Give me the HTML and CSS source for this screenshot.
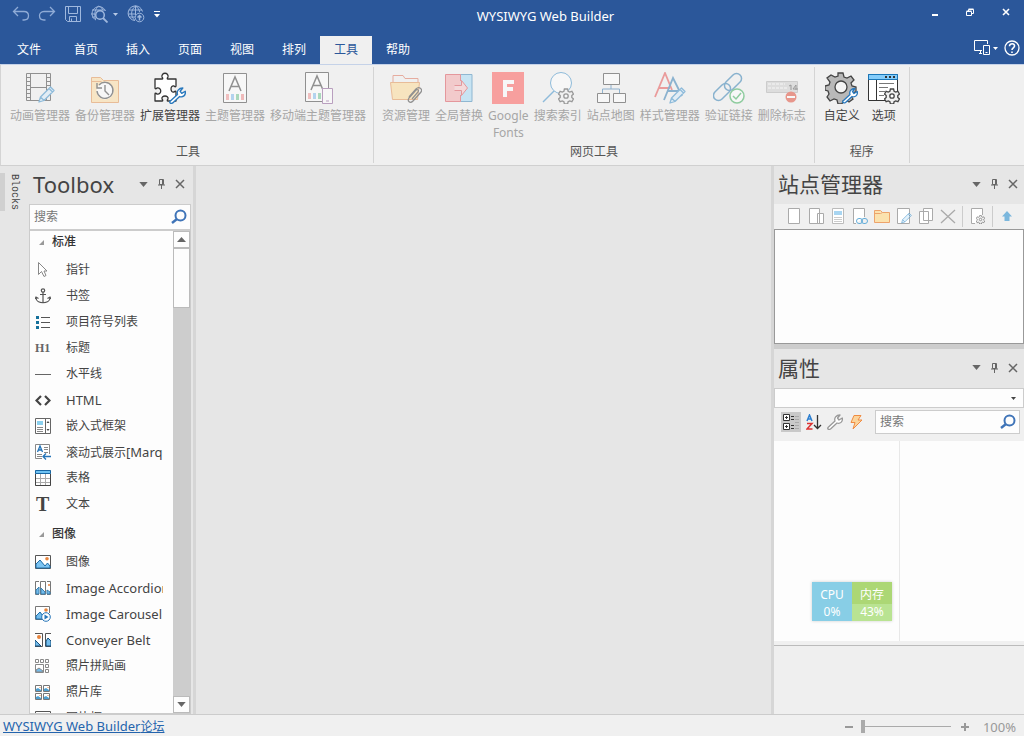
FILE: index.html
```html
<!DOCTYPE html>
<html lang="zh-CN">
<head>
<meta charset="utf-8">
<meta name="viewport" content="width=device-width, initial-scale=1">
<title>WYSIWYG Web Builder</title>
<link rel="stylesheet" href="styles.css">
</head>
<body>
<svg class="defs" aria-hidden="true">
  <symbol id="caret" viewBox="0 0 10 6"><path d="M0 0h10L5 6z" fill="currentColor"/></symbol>
  <symbol id="pin" viewBox="0 0 9 12"><path d="M2.500 1.500h4v5h-4zM5.500 1.500v5M1 7h7M4.500 7v4" fill="none" stroke="currentColor"/></symbol>
  <symbol id="close" viewBox="0 0 10 10"><path d="M1 1l8 8M9 1L1 9" fill="none" stroke="currentColor" stroke-width="1.500"/></symbol>
  <symbol id="lens" viewBox="0 0 16 16"><circle cx="9.500" cy="6.500" r="5" fill="none" stroke="#3f74b8" stroke-width="2"/><path d="M6 10l-5 4" stroke="#3f74b8" stroke-width="2.500"/></symbol>
  <symbol id="gear" viewBox="-8 -8 16 16"><path d="M-1.600-7h3.200l.5 2.200 1.600.9 2.200-.8 1.600 2.800-1.700 1.500v1.800l1.700 1.500-1.600 2.800-2.200-.8-1.600.9-.5 2.200h-3.200l-.5-2.200-1.600-.9-2.200.8-1.600-2.800 1.700-1.500v-1.800l-1.700-1.500 1.600-2.800 2.200.8 1.600-.9z" fill="#f0f0f0" stroke="#444" stroke-width="1.300"/><circle r="2.200" fill="#fff" stroke="#444" stroke-width="1.300"/></symbol>
  <symbol id="wrench" viewBox="0 0 16 16"><path d="M1 13.500L8 7C7 4 9 1 13 1l-2.500 3 1.500 2 3.300-2C16 8 13 10 10 9l-6.500 6C2 16 0 15 1 13.500z" fill="#fff" stroke="currentColor" stroke-width="1.300" stroke-linejoin="round"/></symbol>
  <symbol id="pencil" viewBox="0 0 17 17"><path d="M1 16l1.500-5L12.500 1l3.500 3.500L6 14.500zM2.500 11L6 14.500M11 2.500L14.500 6" fill="#d5ecfb" stroke="#2f87c5" stroke-width="1.300" stroke-linejoin="round"/></symbol>
  <symbol id="photo" viewBox="0 0 16 14"><path d="M.5.5h15v13H.5z" fill="#fff" stroke="#555"/><path d="M1 9l4-4 5 6 2.500-3L15 11v2H1z" fill="#7cc4f2" stroke="#1c6ca8"/><circle cx="12" cy="3.800" r="1.800" fill="#e8853e"/></symbol>
  <symbol id="thumbnail" viewBox="0 0 7 7"><path d="M.5.5h6v6h-6z" fill="#fff" stroke="#777"/><path d="M1 4l2-1 3 2v1H1z" fill="#4d9fd0"/><path d="M4.500 2h1v1h-1z" fill="#e8853e"/></symbol>
</svg>

<header class="app-header">
  <div class="titlebar">
    <div class="quick">
      <button aria-label="撤消"><svg width="18" height="18" viewBox="0 0 18 18" fill="none" stroke="#8fabd6" stroke-width="1.300"><path d="M6 2L1.500 6.500 6 11M1.500 6.500H12c6 0 6 8.500 0 8.500h-1.500"/></svg></button>
      <button aria-label="重做"><svg width="18" height="18" viewBox="0 0 18 18" fill="none" stroke="#8fabd6" stroke-width="1.300"><path d="M12 2l4.500 4.500L12 11M16.500 6.500H6C0 6.500 0 15 6 15h1.500"/></svg></button>
      <button aria-label="保存"><svg width="18" height="18" viewBox="0 0 18 18" fill="none" stroke="#9fb8de"><path d="M1.500 1.500h15v15h-13l-2-2zM4.500 1.500v7h9v-7M5.500 16.500v-5h7v5M7.500 13.500v3"/></svg></button>
      <button class="preview" aria-label="预览"><svg width="18" height="18" viewBox="0 0 18 18" fill="none" stroke="#9fb8de"><path d="M15.500 6A7 7 0 1 0 6 15M8.500 1C5 4 4 9 5.500 14.500M8.500 1c3 1 4 3 4.500 4M2 5h13M1 9h4M2 12h3"/><circle cx="10" cy="10" r="4.300" stroke-width="1.500"/><path d="M13 13l4.500 4.500" stroke-width="1.800"/></svg><svg width="5" height="3" class="pale"><use href="#caret"/></svg></button>
      <button class="publish" aria-label="发布"><svg width="18" height="18" viewBox="0 0 18 18" fill="none" stroke="#9fb8de"><path d="M15.500 6.500A7.300 7.300 0 1 0 8 15.500M8.500 1c-5 4-5 10-1 14M8.500 1c2.500 1.500 4 4 4 6M8.500 1v9M2 5h13M1 9h8M2 12h6"/><circle cx="12.500" cy="12.500" r="4.300"/><path d="M12.500 15.500v-5M10.500 12.500l2-2 2 2" stroke-width="1.500"/></svg></button>
      <button class="more" aria-label="自定义快速访问工具栏"><svg width="6" height="7" viewBox="0 0 6 7" fill="#fff"><path d="M0 0h6v1H0zM0 3h6L3 6.500z"/></svg></button>
    </div>
    <h1 class="title">WYSIWYG Web Builder</h1>
    <div class="window-buttons">
      <button aria-label="最小化"><svg width="8" height="12"><path d="M1 9h6" stroke="#fff" stroke-width="2"/></svg></button>
      <button aria-label="还原"><svg width="9" height="9" fill="none" stroke="#fff"><path d="M.5 3.500h5v4h-5zM2.500 3.500v-2h5v4h-2M2.500 1h5M.5 3h5"/></svg></button>
      <button aria-label="关闭"><svg width="8" height="8" fill="none" stroke="#fff" stroke-width="1.600"><path d="M1 1l6 6M7 1L1 7"/></svg></button>
    </div>
  </div>
  <nav class="tabs">
    <button class="tab file">文件</button>
    <button class="tab">首页</button>
    <button class="tab">插入</button>
    <button class="tab">页面</button>
    <button class="tab">视图</button>
    <button class="tab">排列</button>
    <button class="tab active">工具</button>
    <button class="tab">帮助</button>
    <div class="tab-tools">
      <button aria-label="断点"><svg width="17" height="16" viewBox="0 0 17 16" fill="none" stroke="#fff"><path d="M8 10.500H.5v-10h13V4M5 13.500h3M6.500 11v2.500M9.500 5.500h6v9h-6zM11.500 12.500h2"/></svg><svg width="5" height="3"><use href="#caret"/></svg></button>
      <button aria-label="帮助"><svg width="16" height="16" fill="none" stroke="#fff" stroke-width="1.300"><circle cx="8" cy="8" r="7"/><path d="M5.500 6.200C5.500 2.800 11 3 10.500 6.200 10.300 7.800 8 8 8 10M8 11.500V13" stroke-width="1.600"/></svg></button>
    </div>
  </nav>
</header>

<section class="ribbon">
  <div class="group">
    <div class="commands">
      <button class="command" disabled><svg width="32" height="32" fill="none" stroke="#333"><path d="M2.500 1.500h24v27h-24zM6.500 1.500v27M22.500 1.500v27M6.500 15.500h16M2.500 5.500h4M2.500 9.500h4M2.500 13.500h4M2.500 17.500h4M2.500 21.500h4M2.500 25.500h4M22.500 5.500h4M22.500 9.500h4M22.500 13.500h4M22.500 17.500h4"/><use href="#pencil" x="14" y="14" width="17" height="17"/></svg><span>动画管理器</span></button>
      <button class="command" disabled><svg width="32" height="32" fill="#ffdc9c" stroke="#e28a43"><path d="M2.500 30.500v-25h9l3 3h15v22zM2.500 9.500h10"/><circle cx="16" cy="19" r="8.500" fill="#fff" stroke="none"/><path d="M10 13a8 8 0 1 1-2 6M8 11v5h5M16 13v6l4 4" fill="none" stroke="#333" stroke-width="1.400"/></svg><span>备份管理器</span></button>
      <button class="command"><svg width="32" height="32" fill="#fff" stroke="#333" stroke-width="1.300"><path d="M1 7h7c1 0 1-1 0-2-1-5 7-5 6 0-1 1-1 2 0 2h8v7c0 1-1 1-2 0-4-1-4 7 0 6 1-1 2-1 2 0v9h-8c-1 0-1-1 0-2 1-4-7-4-6 0 1 1 1 2 0 2H1v-7c0-1 1-1 2 0 5 1 5-7 0-6-1 1-2 1-2 0z" stroke-linejoin="round"/><use href="#wrench" x="15" y="15" width="17" height="17" class="blue"/></svg><span>扩展管理器</span></button>
      <button class="command" disabled><svg width="32" height="32" fill="#fff" stroke="#333"><path d="M4.500 1.500h23v29h-23z"/><path d="M10 19l6-14 6 14M12 14.500h8" fill="none" stroke-width="1.500"/><path d="M7 22h3v6H7z" fill="#f09090" stroke="none"/><path d="M12 22h3v6h-3z" fill="#77b8ed" stroke="none"/><path d="M17 22h3v6h-3z" fill="#67c18a" stroke="none"/><path d="M22 22h3v6h-3z" fill="#ef8585" stroke="none"/></svg><span>主题管理器</span></button>
      <button class="command" disabled><svg width="32" height="32" fill="#fff" stroke="#333"><path d="M3.500.5h23v29h-23z"/><path d="M9 18l6-14 6 14M11 13.500h8" fill="none" stroke-width="1.500"/><path d="M6 21h3v6H6z" fill="#f09090" stroke="none"/><path d="M11 21h3v6h-3z" fill="#77b8ed" stroke="none"/><path d="M16 21h3v6h-3z" fill="#67c18a" stroke="none"/><path d="M20.500 16.500h10v15h-10zM24 29h3" stroke="#83518f"/></svg><span>移动端主题管理器</span></button>
    </div>
    <h2 class="group-name">工具</h2>
  </div>
  <div class="group web">
    <div class="commands">
      <button class="command" disabled><svg width="32" height="32" fill="#ffd98f" stroke="#e28a43"><path d="M3 10V3.500h10l2 3h13V11" fill="none" stroke="#dd6b50"/><path d="M.5 10.500h29l-2 17h-25z"/><path d="M19 25l7-8c3-3 7 0 5 3l-8 9c-3 3-6 0-4-3l7-8c2-1 3 0 2 2l-6 7" fill="none" stroke="#333" stroke-width="1.300"/></svg><span>资源管理</span></button>
      <button class="command" disabled><svg width="32" height="32" fill="#f4a5a8" stroke="#d9414a"><path d="M14 2.500h15v27H14z" fill="#9fd9f6" stroke="#317fb4"/><path d="M2.500 2.500h15v27h-15z" stroke="none"/><path d="M17.500 9V2.500h-15v27h15V23" fill="none"/><path d="M11.500 13.500h7v-5l6 7.500-6 7.500v-5h-7" fill="#f8c4c6"/></svg><span>全局替换</span></button>
      <button class="command" disabled><svg width="32" height="32"><path d="M0 0h32v32H0z" fill="#ff504f"/><path d="M11 8h11v4h-7v3h6v4h-6v6h-4z" fill="#fff"/></svg><span>Google<br>Fonts</span></button>
      <button class="command" disabled><svg width="32" height="32" fill="#fff" stroke="#2f87c5"><path d="M1 30l12-12" stroke-width="1.500"/><circle cx="19" cy="11" r="10.500"/><use href="#gear" x="16" y="16" width="16" height="16"/></svg><span>搜索索引</span></button>
      <button class="command" disabled><svg width="32" height="32" fill="#fff" stroke="#333"><path d="M16 13v4M7.500 22v-5h17v5" fill="none" stroke="#2f75ae"/><path d="M8.500 1.500h16v11h-16zM2.500 21.500h12v9h-12zM18.500 21.500h12v9h-12z"/></svg><span>站点地图</span></button>
      <button class="command" disabled><svg width="32" height="32" fill="none" stroke="#e64949" stroke-width="1.800"><path d="M1 25L11 1l7 17M5 16h11"/><path d="M10 28l9-22 9 18M14 19h11" stroke="#2775b0"/><use href="#pencil" x="15" y="15" width="17" height="17"/></svg><span>样式管理器</span></button>
      <button class="command" disabled><svg width="32" height="32" fill="none" stroke="#2375ae" stroke-width="1.500"><rect x="-5" y="-10" width="10" height="20" rx="5" transform="translate(20 10) rotate(45)"/><rect x="-5" y="-10" width="10" height="20" rx="5" transform="translate(9 20) rotate(45)"/><circle cx="24" cy="24" r="7" fill="#fff" stroke="#31aa51"/><path d="M20 24l3 3 5-6" stroke="#31aa51"/></svg><span>验证链接</span></button>
      <button class="command" disabled><svg width="32" height="32" fill="#ccc" stroke="#aaa"><path d="M.5 9.500h31v11H.5z"/><path d="M2 12h17M2 16h20" stroke="#fff" stroke-dasharray="3 1"/><path d="M23 14l2-1v5M30 18v-5l-3 4h5" fill="none" stroke="#444"/><circle cx="25" cy="25" r="5.500" fill="#df3e29" stroke="none"/><path d="M21 25h8" stroke="#fff" stroke-width="2"/></svg><span>删除标志</span></button>
    </div>
    <h2 class="group-name">网页工具</h2>
  </div>
  <div class="group last">
    <div class="commands">
      <button class="command"><svg width="34" height="32" fill="#b8b8b8" stroke="#444" stroke-width="1.300"><path d="M13 1h5l1 4 3 1 4-2 3 4-3 3 1 3 4 1v5l-4 1-1 3 2 3-4 3-3-2-3 1-1 3h-4l-1-4-3-1-4 2-3-4 2-3-1-3-3-1v-4l4-1 1-3-3-4 4-3 4 2 3-1z"/><circle cx="16" cy="15" r="6" fill="#f4f4f4"/><use href="#wrench" x="17" y="15" width="16" height="17" class="blue"/></svg><span>自定义</span></button>
      <button class="command"><svg width="32" height="32" fill="#fff" stroke="#333"><path d="M.5 2.500h29v26H.5zM8.500 7v21"/><path d="M.5 2.500h29v5H.5z" fill="#84ccfa" stroke="#1976b8"/><path d="M17 5h2M21 5h2M25 5h2" stroke-width="2"/><path d="M11 11.500h15M11 15.500h9M11 19.500h6M11 23.500h5" stroke="#777"/><use href="#gear" x="16" y="16" width="16" height="16"/></svg><span>选项</span></button>
    </div>
    <h2 class="group-name">程序</h2>
  </div>
</section>

<main class="workspace">
  <aside class="dock-strip"><button class="dock-tab">Blocks</button></aside>

  <section class="toolbox">
    <header class="panel-head">
      <h2 class="latin-title">Toolbox</h2>
      <button aria-label="菜单"><svg width="9" height="5"><use href="#caret"/></svg></button>
      <button aria-label="固定"><svg width="9" height="12"><use href="#pin"/></svg></button>
      <button aria-label="关闭"><svg width="10" height="10"><use href="#close"/></svg></button>
    </header>
    <label class="search"><input type="text" placeholder="搜索" aria-label="搜索工具"><svg width="16" height="16"><use href="#lens"/></svg></label>
    <div class="tool-area">
      <div class="tool-list">
        <h3><svg width="5" height="5"><path d="M5 0v5H0z" fill="#999"/></svg>标准</h3>
        <ul>
          <li><svg width="16" height="16" fill="#fff" stroke="#888"><path d="M3.500.5v12l3-3 2.500 5 2-1-2-4.500H12z"/></svg><span>指针</span></li>
          <li><svg width="16" height="16" fill="none" stroke="#555" stroke-width="1.200"><circle cx="8" cy="2.500" r="1.700"/><path d="M8 4v11M5 6.500h6M1 9.500c0 7 14 7 14 0M0 11l1-2 2.500 1.500M12.500 10.500L15 9l1 2"/></svg><span>书签</span></li>
          <li><svg width="16" height="16" fill="#16719b"><path d="M1 2h3v3H1zM1 7h3v3H1zM1 12h3v3H1z"/><path d="M6 3.500h9M6 8.500h9M6 13.500h9" stroke="#555"/></svg><span>项目符号列表</span></li>
          <li><b class="h1-icon">H1</b><span>标题</span></li>
          <li><svg width="16" height="16"><path d="M0 8.500h16" stroke="#666"/></svg><span>水平线</span></li>
          <li><svg width="16" height="16" fill="none" stroke="#444" stroke-width="2.200"><path d="M6 4L1.500 8.500 6 13M10 4l4.500 4.500L10 13"/></svg><span class="latin">HTML</span></li>
          <li><svg width="16" height="16" fill="#fff" stroke="#666"><path d="M.5.500h15v15H.5zM10.500.5v15"/><path d="M2 3h6v4H2z" fill="#8bd0ee" stroke="none"/><path d="M2 9.500h6M2 11.500h6M2 13.500h6" stroke="#888"/><path d="M11.500 5h3l-1.500-2zM11.500 11h3l-1.500 2z" fill="#444" stroke="none"/></svg><span>嵌入式框架</span></li>
          <li><svg width="16" height="16" fill="#fff" stroke="#888"><path d="M14.500 10V.5H.5v14H7M9 3.500h4M9 5.500h4M9 8.500h4M2 10.500h5M2 12.500h5"/><path d="M2.500 8L5 2l2.500 6M3.500 6h3M8 12.500h8M11 9.500l-3 3 3 3" fill="none" stroke="#2474b8" stroke-width="1.300"/></svg><span>滚动式展示<span class="latin">[Marquee]</span></span></li>
          <li><svg width="16" height="16" fill="#fff" stroke="#aaa"><path d="M.5.500h15v15H.5zM5.500 4v11M10.500 4v11M1 8.500h14M1 12.500h14"/><path d="M.5 4v11.500h15V4" fill="none" stroke="#444"/><path d="M.5.500h15v3H.5z" fill="#6fc2f2" stroke="#1867a4"/></svg><span>表格</span></li>
          <li><b class="text-icon">T</b><span>文本</span></li>
        </ul>
        <h3><svg width="5" height="5"><path d="M5 0v5H0z" fill="#999"/></svg>图像</h3>
        <ul>
          <li><svg width="16" height="14"><use href="#photo"/></svg><span>图像</span></li>
          <li><svg width="16" height="14" fill="#fff" stroke="#777"><path d="M4 .5H.5v13H4M5.500.5h5v13h-5zM12 .5h3.500v13H12"/><path d="M1 9l3-3v7H1zM6 7l4 4v2H6zM12 9l3 2v2h-3z" fill="#73bcec" stroke="#3b80b0"/><circle cx="14" cy="4" r="1" fill="#e8853e" stroke="none"/></svg><span class="latin">Image Accordion</span></li>
          <li><svg width="16" height="16" fill="#fff" stroke="#777"><path d="M7 13.500H.5V.5h14V7"/><path d="M1 10l4-4 3 4v3H1z" fill="#73bcec" stroke="#1c6ca8"/><circle cx="11" cy="4" r="1.800" fill="#e8853e" stroke="none"/><circle cx="11" cy="11" r="4.300" stroke="#2474b8"/><path d="M9.500 8.500l4 2.500-4 2.500z" fill="#2474b8" stroke="none"/></svg><span class="latin">Image Carousel</span></li>
          <li><svg width="16" height="14" fill="#fff" stroke="#555"><path d="M0 .5h7.500v13H0M16 .5h-5.500v13H16"/><path d="M0 7l6 6H0zM11 8l2-3 3 3v5h-5z" fill="#73bcec" stroke="#164f7b"/><circle cx="4" cy="4" r="2" fill="#e8853e" stroke="none"/></svg><span class="latin">Conveyer Belt</span></li>
          <li><svg width="14" height="14" fill="#fff" stroke="#888"><path d="M.5.500h3v3h-3zM5.500.500h3v3h-3zM10.500.500h3v3h-3zM10.500 5.500h3v3h-3zM10.500 10.500h3v3h-3zM.5 5.500h8v8h-8z"/><path d="M1 11l3-2 4 3v1H1z" fill="#73bcec"/></svg><span>照片拼贴画</span></li>
          <li><svg width="15" height="15"><use href="#thumbnail" width="7" height="7"/><use href="#thumbnail" x="8" width="7" height="7"/><use href="#thumbnail" y="8" width="7" height="7"/><use href="#thumbnail" x="8" y="8" width="7" height="7"/></svg><span>照片库</span></li>
          <li><svg width="16" height="14"><use href="#photo"/></svg><span>图片框</span></li>
        </ul>
      </div>
      <div class="scrollbar">
        <button aria-label="向上"><svg width="9" height="5"><path d="M0 5h9L4.500 0z" fill="#666"/></svg></button>
        <div class="thumb"></div>
        <button class="down" aria-label="向下"><svg width="9" height="5"><use href="#caret"/></svg></button>
      </div>
    </div>
  </section>
  <div class="splitter"></div>
  <section class="canvas"></section>
  <div class="splitter right"></div>

  <aside class="side">
    <section class="site">
      <header class="panel-head">
        <h2>站点管理器</h2>
        <button aria-label="菜单"><svg width="9" height="5"><use href="#caret"/></svg></button>
        <button aria-label="固定"><svg width="9" height="12"><use href="#pin"/></svg></button>
        <button aria-label="关闭"><svg width="10" height="10"><use href="#close"/></svg></button>
      </header>
      <div class="site-tools">
        <button aria-label="新建页面"><svg width="16" height="16" fill="#fff" stroke="#aaa"><path d="M2.500.5h11v15h-11z"/></svg></button>
        <button aria-label="移动页面"><svg width="16" height="16" fill="#fff" stroke="#aaa"><path d="M1.500.5h10v15h-10zM9.500 5.500h6v10h-6z"/></svg></button>
        <button aria-label="模板页面"><svg width="16" height="16" fill="#fff" stroke="#bbb"><path d="M2.500.5h11v15h-11z"/><path d="M4 3h8v4H4z" fill="#a8d5f1" stroke="none"/><path d="M4 9.500h8M4 11.500h8M4 13.500h8" stroke="#ccc"/></svg></button>
        <button aria-label="链接"><svg width="16" height="16" fill="none" stroke="#aaa"><path d="M4 15.500H1.500V.5h11V9" fill="#fff"/><rect x="4.500" y="10.500" width="6" height="5" rx="2.500" stroke="#64add9"/><rect x="9.500" y="10.500" width="6" height="5" rx="2.500" stroke="#64add9"/></svg></button>
        <button aria-label="文件夹"><svg width="16" height="16" fill="#fbe2ae" stroke="#eda36b"><path d="M.5 14.500v-12h6l2 2h7v10zM.5 5.500h6l2-1"/></svg></button>
        <button aria-label="编辑"><svg width="16" height="16" fill="#fff" stroke="#aaa"><path d="M1.500.5h12v15h-12z"/><use href="#pencil" x="5" y="4" width="11" height="12" opacity=".6"/></svg></button>
        <button aria-label="复制"><svg width="16" height="16" fill="#fff" stroke="#aaa"><path d="M5.500.500h9v12h-9zM1.500 3.500h9v12h-9z"/></svg></button>
        <button aria-label="删除"><svg width="16" height="16" fill="none" stroke="#aaa" stroke-width="1.300"><path d="M1 2l14 13M15 2L1 15"/></svg></button>
        <span class="divider"></span>
        <button aria-label="属性"><svg width="17" height="16" fill="#fff" stroke="#aaa"><path d="M6 15.500H2.500V.5h11V7"/><use href="#gear" x="7" y="7" width="9" height="9" opacity=".7"/></svg></button>
        <span class="divider"></span>
        <button aria-label="上移"><svg width="16" height="16"><path d="M8 3L3 8.500h2.500V13h5V8.500H13z" fill="#7bb7dd"/></svg></button>
      </div>
      <div class="tree"></div>
    </section>
    <section class="properties">
      <header class="panel-head">
        <h2>属性</h2>
        <button aria-label="菜单"><svg width="9" height="5"><use href="#caret"/></svg></button>
        <button aria-label="固定"><svg width="9" height="12"><use href="#pin"/></svg></button>
        <button aria-label="关闭"><svg width="10" height="10"><use href="#close"/></svg></button>
      </header>
      <div class="object-picker"><select aria-label="对象"><option></option></select><svg width="5" height="3"><use href="#caret"/></svg></div>
      <div class="property-tools">
        <button class="pressed" aria-label="分类"><svg width="16" height="16" fill="#fff" stroke="#333"><path d="M.5.500h6v6h-6zM.5 9.500h6v6h-6zM2 3.500h3M3.500 2v3M2 12.500h3M3.500 11v3"/><path d="M8 2.500h3M8 5.500h3M8 11.500h3M8 14.500h3"/><path d="M12 2.500h4M12 5.500h4M12 8.500h4M12 11.500h4M12 14.500h4" stroke="#aaa"/></svg></button>
        <button aria-label="排序"><svg width="16" height="16" fill="none" stroke-width="1.500"><path d="M1 7l2.500-6L6 7M2 5h3" stroke="#2d7fd0"/><path d="M1 9.500h5L1 15h5.500" stroke="#dc3434"/><path d="M11.500 1v13M8 11l3.500 3.500L15 11" stroke="#333" stroke-width="1.300"/></svg></button>
        <button aria-label="属性"><svg width="16" height="16" class="grey"><use href="#wrench"/></svg></button>
        <button aria-label="事件"><svg width="16" height="16" fill="#fbd49b" stroke="#f08b42"><path d="M6 1.500h7L10 6h4l-9 9 2-6.500H3z"/></svg></button>
        <label class="search"><input type="text" placeholder="搜索" aria-label="搜索属性"><svg width="16" height="16"><use href="#lens"/></svg></label>
      </div>
      <div class="property-grid"><div></div><div></div></div>
      <div class="description"></div>
    </section>
  </aside>
</main>

<footer class="status">
  <a href="#forum"><span class="latin">WYSIWYG Web Builder</span>论坛</a>
  <div class="zoom">
    <button aria-label="缩小" disabled><svg width="8" height="8"><path d="M0 4h8" stroke="#999" stroke-width="2"/></svg></button>
    <input type="range" min="0" max="100" value="0" aria-label="缩放" disabled>
    <button aria-label="放大" disabled><svg width="8" height="8"><path d="M0 4h8M4 0v8" stroke="#999" stroke-width="2"/></svg></button>
    <span>100%</span>
  </div>
</footer>

<div class="monitor">
  <div class="cpu"><span>CPU</span><span>0%</span></div>
  <div class="memory"><span>内存</span><span>43%</span></div>
</div>
</body>
</html>
```
FILE: styles.css
```css
* { box-sizing: border-box; }

body {
  margin: 0;
  height: 100vh;
  display: flex;
  flex-direction: column;
  overflow: hidden;
  background: #e6e6e6;
  color: #444;
  font: 12px/16px "Noto Sans", "Noto Sans CJK SC", sans-serif;
}

button, input, select { font: inherit; color: inherit; }
button { margin: 0; padding: 0; border: 0; background: none; }
h1, h2, h3, ul { margin: 0; padding: 0; font: inherit; list-style: none; }
svg { display: block; flex: none; }
.defs { position: absolute; width: 0; height: 0; }
.latin { font-size: 13px; }
.blue { color: #2878bd; }
.grey { color: #999; }
.pale { color: #b8cae6; }

/* Title bar and tabs */
.app-header { background: #2b579a; color: #fff; flex: none; }
.titlebar { display: flex; height: 36px; }
.quick { display: flex; align-items: center; height: 28px; padding-left: 12px; gap: 8px; }
.preview { display: flex; align-items: center; gap: 5px; }
.publish { margin-left: 1px; }
.more { margin-left: 1px; }
.title { flex: 1; text-align: center; font-size: 13px; line-height: 32px; }
.window-buttons { display: flex; align-items: center; height: 24px; gap: 27px; padding-right: 14px; }
.tabs { display: flex; height: 28px; }
.tab { width: 52px; }
.tab.file { width: 60px; padding-right: 2px; }
.tab.active { background: #f0f0f0; color: #2b579a; }
.tab-tools { display: flex; align-items: center; gap: 6px; margin-left: auto; padding: 0 4px 4px 0; }
.tab-tools button { display: flex; align-items: center; gap: 2px; }

/* Ribbon */
.ribbon {
  display: flex;
  flex: none;
  height: 102px;
  background: #f0f0f0;
  border-top: 1px solid #c5d2e8;
  border-left: 1px solid #d4d4d4;
  border-bottom: 1px solid #d0d0d0;
}
.group {
  display: flex;
  flex-direction: column;
  margin: 2px 0;
  padding: 5px 7px 2px 8px;
  border-right: 1px solid #d4d4d4;
}
.group:first-child { padding-left: 9px; }
.group.web { padding-right: 8px; }
.group.last { padding: 5px 9px 2px; }
.commands { display: flex; flex: 1; gap: 5px; }
.last .commands { gap: 8px; }
.command {
  display: flex;
  flex-direction: column;
  align-items: center;
  gap: 3px;
  color: #444;
  line-height: 17px;
  white-space: nowrap;
}
.command:disabled { color: #a6a6a6; }
.command:disabled svg { opacity: .5; }
.group-name { text-align: center; line-height: 18px; color: #555; }

/* Work area */
.workspace { display: flex; flex: 1; min-height: 0; }
.dock-strip { flex: none; width: 29px; padding-top: 7px; }
.dock-tab {
  width: 24px;
  height: 38px;
  padding-right: 2px;
  border-left: 5px solid #d0d0d0;
  writing-mode: vertical-rl;
  font: 10px/14px "Liberation Mono", monospace;
}
.toolbox { display: flex; flex-direction: column; flex: none; width: 162px; }
.panel-head { display: flex; align-items: center; gap: 9px; height: 38px; padding: 0 6px 2px 4px; color: #666; }
.panel-head h2 { margin-right: auto; font-size: 21px; line-height: 30px; color: #444; }
.panel-head .latin-title { font-size: 22px; }
.search {
  display: flex;
  align-items: center;
  padding: 0 3px 0 4px;
  border: 1px solid #ccc;
  background: #fdfdfd;
}
.search input { width: 0; flex: 1; padding: 0; border: 0; outline: 0; background: none; }
.search input::placeholder { color: #777; opacity: 1; }
.toolbox .search { height: 26px; flex: none; }
.tool-area { display: flex; flex: 1; min-height: 0; border: 1px solid #ccc; background: #fdfdfd; }
.tool-list { flex: 1; min-width: 0; padding-right: 10px; overflow: hidden; }
.tool-list h3 { display: flex; align-items: center; gap: 8px; height: 22px; margin: 0 0 4px; padding-left: 9px; font-weight: 500; color: #333; }
.tool-list ul + h3 { margin-top: 6px; }
.tool-list li { display: grid; grid-template-columns: 16px 1fr; align-items: center; gap: 15px; height: 26px; padding-left: 5px; }
.tool-list li > span { overflow: hidden; white-space: nowrap; }
.h1-icon { font: bold 12px/16px "Liberation Serif", serif; color: #666; }
.text-icon { font: bold 20px/20px "Liberation Serif", serif; padding-left: 1px; }
.scrollbar { display: flex; flex-direction: column; flex: none; width: 17px; background: #cdcdcd; }
.scrollbar button { display: grid; place-items: center; height: 17px; border: 1px solid #bbb; background: #fdfdfd; color: #666; }
.thumb { height: 60px; border: 1px solid #bbb; background: #fdfdfd; }
.scrollbar .down { margin-top: auto; }
.splitter { flex: none; width: 5px; border-right: 3px solid #d6d6d6; }
.splitter.right { width: 4px; }
.canvas { flex: 1; background: #e6e6e6; }

/* Site manager and properties */
.side { display: flex; flex-direction: column; flex: none; width: 250px; }
.site { flex: none; border-bottom: 5px solid #cdcdcd; }
.site-tools { display: flex; align-items: center; gap: 6px; height: 25px; padding: 0 8px 1px 12px; background: #f0f0f0; }
.divider { width: 1px; height: 21px; background: #ccc; }
.tree { height: 115px; border: 1px solid #999; background: #fdfdfd; }
.properties { display: flex; flex-direction: column; flex: 1; min-height: 0; background: #f0f0f0; }
.properties .panel-head { height: 39px; background: #e6e6e6; }
.object-picker { display: flex; align-items: center; height: 20px; padding-right: 7px; border: 1px solid #ccc; background: #fdfdfd; }
.object-picker select { flex: 1; border: 0; background: none; appearance: none; }
.property-tools { display: flex; align-items: center; gap: 5px; height: 33px; padding: 0 4px 6px 7px; }
.pressed { padding: 2px; background: #c9c9c9; }
.property-tools .search { flex: 1; height: 24px; margin-left: 6px; }
.property-grid { display: grid; grid-template-columns: 1fr 1fr; flex: 1; background: #fdfdfd; border-bottom: 4px solid #f0f0f0; }
.property-grid div:last-child { border-left: 1px solid #e8e8e8; }
.description { height: 69px; border-top: 1px solid #bbb; background: #efefef; }

/* Status bar */
.status {
  display: flex;
  align-items: center;
  justify-content: space-between;
  flex: none;
  height: 22px;
  padding: 2px 8px 0 3px;
  border-top: 1px solid #ccc;
  background: #f0f0f0;
}
.status a { color: #2464ad; }
.zoom { display: flex; align-items: center; gap: 10px; color: #999; font-size: 13px; line-height: 18px; }
.zoom input { appearance: none; width: 90px; height: 13px; margin: 0 0 0 -2px; background: linear-gradient(#aaa, #aaa) center / 100% 1px no-repeat; }
.zoom input::-webkit-slider-thumb { appearance: none; width: 4px; height: 13px; background: #aaa; }
.zoom span { margin-left: 4px; }

/* Floating system monitor */
.monitor {
  position: absolute;
  right: 132px;
  bottom: 115px;
  display: grid;
  grid-template-columns: 40px 40px;
  color: #fff;
  text-align: center;
  box-shadow: 0 0 3px #ccc;
}
.monitor span { display: block; padding-bottom: 1px; }
.monitor span:first-child { padding: 3px 0 0; line-height: 19px; }
.cpu { background: #88cee6; }
.memory { background: #b9e392; }
.memory span:first-child { background: #acd775; }
```
